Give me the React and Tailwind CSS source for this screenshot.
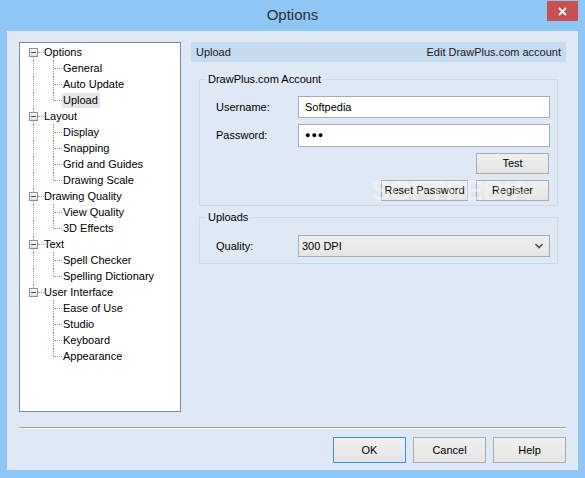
import React from "react";

const tree = [
  { label: "Options", children: ["General", "Auto Update", "Upload"] },
  { label: "Layout", children: ["Display", "Snapping", "Grid and Guides", "Drawing Scale"] },
  { label: "Drawing Quality", children: ["View Quality", "3D Effects"] },
  { label: "Text", children: ["Spell Checker", "Spelling Dictionary"] },
  { label: "User Interface", children: ["Ease of Use", "Studio", "Keyboard", "Appearance"] },
];

const dotV = "absolute border-l border-dotted border-[#9a9a9a]";
const dotH = "absolute border-t border-dotted border-[#9a9a9a]";

function ParentRow({ label, first, last }) {
  return (
    <div className="flex h-[16px] items-center">
      <div className="relative h-[16px] w-[24px] shrink-0">
        {!first && <div className={`${dotV} left-[13px] top-0 h-[4px]`} />}
        {!last && <div className={`${dotV} left-[13px] top-[13px] bottom-0`} />}
        <div className="absolute left-[9px] top-[4px] h-[9px] w-[9px] border border-[#919191] bg-gradient-to-b from-white to-[#e2e2e2]">
          <div className="absolute left-[1px] top-[3px] h-[1px] w-[5px] bg-[#3a4660]" />
        </div>
        <div className={`${dotH} left-[18px] top-[8px] w-[6px]`} />
      </div>
      <span className="whitespace-nowrap leading-[15px]">{label}</span>
    </div>
  );
}

function ChildRow({ label, parentLast, lastChild, selected }) {
  return (
    <div className="flex h-[16px] items-center">
      <div className="relative h-[16px] w-[24px] shrink-0">
        {!parentLast && <div className={`${dotV} left-[13px] top-0 bottom-0`} />}
      </div>
      <div className="relative h-[16px] w-[19px] shrink-0">
        <div className={`${dotV} left-[9px] top-0 ${lastChild ? "h-[8px]" : "bottom-0"}`} />
        <div className={`${dotH} left-[10px] top-[8px] w-[8px]`} />
      </div>
      <span
        className={`whitespace-nowrap leading-[15px] ${selected ? "ml-[-1px] bg-[#e6e6e6] pl-[1px] pr-[2px]" : ""}`}
      >
        {label}
      </span>
    </div>
  );
}

function Btn({ children, className = "", def = false }) {
  return (
    <div
      className={`relative z-10 flex items-center justify-center border bg-gradient-to-b from-[#f0f0f0] to-[#e5e5e5] text-black ${
        def ? "border-[#3c8ee6]" : "border-[#acacac]"
      } ${className}`}
    >
      {children}
    </div>
  );
}

export default function App() {
  return (
    <div
      className="flex h-[478px] w-[585px] flex-col bg-[#8fc6f5] text-[11px] text-black"
      style={{ fontFamily: '"Liberation Sans", Arial, sans-serif' }}
    >
      {/* title bar */}
      <div className="relative flex h-[31px] shrink-0 items-center justify-center">
        <span className="text-[15px] text-[#2e2e2e]">Options</span>
        <div className="absolute right-[7px] top-[1px] flex h-[20px] w-[31px] items-center justify-center bg-[#c75050]">
          <svg width="9" height="9" viewBox="0 0 9 9">
            <path d="M1 1 L8 8 M8 1 L1 8" stroke="white" strokeWidth="1.8" />
          </svg>
        </div>
      </div>

      {/* client area */}
      <div className="mx-[7px] flex h-[439px] flex-col bg-[#dfe9f5] px-[12px] pt-[11px]">
        <div className="flex gap-[10px]">
          {/* tree */}
          <div className="h-[370px] w-[162px] shrink-0 border border-[#828790] bg-white pt-[1px]">
            {tree.map((g, gi) => (
              <React.Fragment key={g.label}>
                <ParentRow label={g.label} first={gi === 0} last={gi === tree.length - 1} />
                {g.children.map((c, ci) => (
                  <ChildRow
                    key={c}
                    label={c}
                    parentLast={gi === tree.length - 1}
                    lastChild={ci === g.children.length - 1}
                    selected={c === "Upload"}
                  />
                ))}
              </React.Fragment>
            ))}
          </div>

          {/* right panel */}
          <div className="relative flex w-[375px] flex-col">
            <div className="flex h-[20px] items-center justify-between bg-[#c5d9ef] px-[5px] text-[#1a1a1a]">
              <span>Upload</span>
              <span>Edit DrawPlus.com account</span>
            </div>

            <fieldset className="mx-[8px] mt-[11px] border border-[#d0dae6] pb-[4px] pl-[16px] pr-[7px]">
              <legend className="ml-[-10px] px-[2px] leading-[13px]">DrawPlus.com Account</legend>
              <div className="mt-[10px] flex h-[22px] items-center">
                <span className="w-[82px]">Username:</span>
                <div className="flex h-[22px] w-[252px] items-center border border-[#abadb3] bg-white px-[6px]">
                  Softpedia
                </div>
              </div>
              <div className="mt-[6px] flex h-[23px] items-center">
                <span className="w-[82px]">Password:</span>
                <div className="flex h-[23px] w-[252px] items-center border border-[#abadb3] bg-white px-[6px]">
                  <span className="text-[9px] tracking-[1px]">●●●</span>
                </div>
              </div>
              <div className="mt-[6px] flex justify-end">
                <Btn className="mr-[1px] h-[21px] w-[73px]">Test</Btn>
              </div>
              <div className="mt-[6px] flex justify-end gap-[8px]">
                <Btn className="h-[21px] w-[87px]">Reset Password</Btn>
                <Btn className="mr-[1px] h-[21px] w-[73px]">Register</Btn>
              </div>
            </fieldset>

            <fieldset className="mx-[8px] mt-[5px] border border-[#d0dae6] pb-[6px] pl-[16px] pr-[7px]">
              <legend className="ml-[-10px] px-[2px] leading-[13px]">Uploads</legend>
              <div className="mt-[11px] flex h-[22px] items-center">
                <span className="w-[82px]">Quality:</span>
                <div className="flex h-[22px] w-[252px] items-center justify-between border border-[#acacac] bg-gradient-to-b from-[#f0f0f0] to-[#e5e5e5] pl-[3px] pr-[6px]">
                  <span>300 DPI</span>
                  <svg width="8" height="6" viewBox="0 0 8 6">
                    <path d="M0.5 1 L4 4.5 L7.5 1" fill="none" stroke="#555" strokeWidth="1.6" />
                  </svg>
                </div>
              </div>
            </fieldset>

            {/* watermark overlay */}
            <div className="pointer-events-none absolute left-[180px] top-[128px] z-20 select-none text-[28px] font-bold text-white opacity-35">
              SOFTPEDIA<sup className="text-[8px]">®</sup>
            </div>
          </div>
        </div>

        {/* separator */}
        <div className="mt-[15px] h-[2px] border-b border-t border-b-white border-t-[#a0a0a0]" />

        {/* buttons */}
        <div className="mt-[8px] flex justify-end gap-[7px]">
          <Btn def className="h-[26px] w-[73px]">OK</Btn>
          <Btn className="h-[26px] w-[73px]">Cancel</Btn>
          <Btn className="h-[26px] w-[73px]">Help</Btn>
        </div>
      </div>
    </div>
  );
}
